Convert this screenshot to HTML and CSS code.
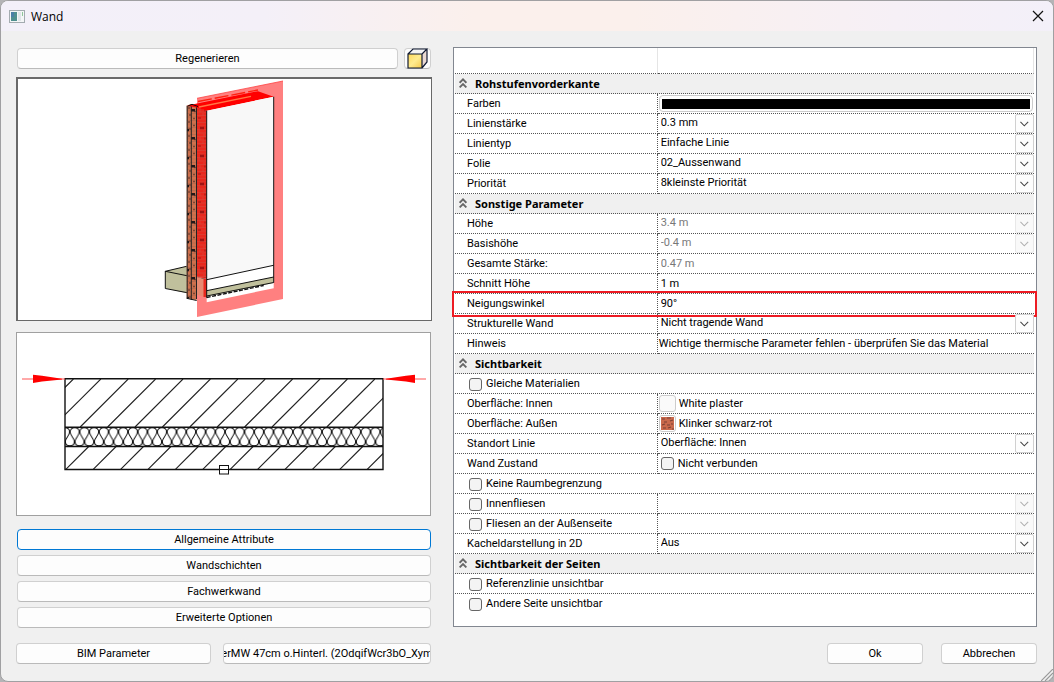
FILE: index.html
```
<!DOCTYPE html>
<html lang="de">
<head>
  <meta charset="UTF-8" />
  <meta name="viewport" content="width=device-width, initial-scale=1" />
  <title>Wand</title>
  <link rel="stylesheet" href="styles.css">
</head>
<body>

  <!-- gemeinsame Symbole -->
  <svg class="defs" width="0" height="0" aria-hidden="true">
    <symbol id="chevron" viewBox="0 0 18 18"><path d="M4.7 7.3l4.1 4.1 4.1-4.1" fill="none" stroke="currentColor" stroke-width="1.1" /></symbol>
    <symbol id="collapse" viewBox="0 0 8 10"><path d="M.6 4.8L4 1.4l3.4 3.4M.6 9.4L4 6l3.4 3.4" fill="none" stroke="#666" stroke-width="1.9" /></symbol>
  </svg>

  <div class="dialog">
    <header class="titlebar">
      <svg class="app-icon" width="16" height="13" viewBox="0 0 16 13">
        <rect x=".5" y=".5" width="15" height="12" fill="#f4f6f7" stroke="#a3abb0" />
        <rect x="2" y="2" width="6" height="9" fill="#4f8f8f" />
        <rect x="2" y="2" width="3" height="5" fill="#4a7fa6" />
        <rect x="9" y="2" width="3" height="9" fill="#dfe5e8" />
        <rect x="13" y="2" width="1" height="4" fill="#8fc59a" />
      </svg>
      <h1>Wand</h1>
      <button class="close" aria-label="Schließen">
        <svg width="12" height="12" viewBox="0 0 12 12"><path d="M1 1l10 10M11 1L1 11" stroke="#111" stroke-width="1.2" /></svg>
      </button>
    </header>

    <main class="columns">
      <section class="left">
        <div class="toolbar">
          <button class="btn grow">Regenerieren</button>
          <button class="btn cube" aria-label="3D-Ansicht">
            <svg width="21" height="21" viewBox="0 0 21 21">
              <defs>
                <linearGradient id="gold" x1="0" y1="0" x2="1" y2="1"><stop offset="0" stop-color="#ffd95a" /><stop offset=".5" stop-color="#ffec90" /><stop offset="1" stop-color="#f5c94a" /></linearGradient>
              </defs>
              <path d="M1 6L6 1h14l-5 5z" fill="#f4f4f4" />
              <path d="M15 6l5-5v13l-5 6z" fill="#ead9d2" />
              <rect x="1" y="6" width="14" height="14" fill="url(#gold)" />
              <path d="M1 6h14v14H1zM1 6l5-5h14l-5 5M20 1v13l-5 6" fill="none" stroke="#111a33" stroke-width="1.2" />
            </svg>
          </button>
        </div>

        <div class="view view-3d">
          <svg viewBox="18 79 413 241" role="img" aria-label="3D-Vorschau">
            <defs>
              <pattern id="brick" x="187" y="105" width="10" height="28" patternUnits="userSpaceOnUse">
                <rect width="10" height="28" fill="#d0704c" />
                <path d="M0 1.5h10M0 5h10M0 8.5h10M0 12h10M0 15.5h10M0 19h10M0 22.5h10M0 26h10" stroke="#a8664e" stroke-width=".6" />
                <path d="M1 3h2M7 6.5h2M2 10h2M6 13.5h2M1 17h2M6 20.5h2M2 24h2" stroke="#7a4434" stroke-width="1.6" />
                <path d="M4 5.2h4M0 25h2" stroke="#241818" stroke-width="2.6" />
              </pattern>
              <pattern id="redbrick" x="197" y="98" width="10" height="28" patternUnits="userSpaceOnUse">
                <rect width="10" height="28" fill="#e8281e" />
                <path d="M0 3.5h10M0 7h10M0 10.5h10M0 14h10M0 17.5h10M0 21h10M0 24.5h10M0 28h10M5 0v3M2 4v3M7 8v3M3 11v3M6 15v3" stroke="#d4483c" stroke-width=".6" />
                <path d="M3 2h4" stroke="#a01414" stroke-width="2.6" />
                <path d="M7 12.5h3M1 20h3" stroke="#c42018" stroke-width="2" />
              </pattern>
            </defs>
            <path d="M197 98.3L283 81v218l-86 18z" fill="#ff8080" />
            <path d="M197 98.3L283 81" stroke="#f44" stroke-width=".8" />
            <path d="M206.7 110.7l67-14v191.5l-67 14z" fill="#fff" />
            <!-- Fundament -->
            <path d="M165.3 271.3l21.4-5 10 2v27l-10-2-21.4-5z" fill="#c0c09c" />
            <path d="M186.7 266.3l-21.4 5 41.4 8.4M165.3 271v17.5l31.4 6" fill="none" stroke="#111" />
            <!-- Klinker -->
            <path d="M186.7 105.7l4-1.7 6 2v194l-10-1.7z" fill="url(#brick)" />
            <path d="M187.2 105.7v193M191.3 106v194M196.5 104v195" stroke="#222" />
            <path d="M186.7 298.3l10 2.2" stroke="#111" />
            <path d="M197 107l10 3.7v168l-10-2z" fill="url(#redbrick)" />
            <path d="M197 277l10 2.7v18l-10-3z" fill="#e88a72" />
            <path d="M205 279v18" stroke="#e8281e" stroke-width="3" />
            <!-- Mauerkrone -->
            <path d="M187 105.7l10-2.2 61-12.3 15.7 5.5-67 14-10-3.2z" fill="red" />
            <path d="M199 107l52-10.6" stroke="#ff7846" stroke-width="1.4" />
            <path d="M198 101.5l60-11.5" stroke="#ff2010" stroke-width="1.4" stroke-dasharray="14 3" />
            <path d="M188 106l4-1.7 6 2.2" fill="none" stroke="#111" />
            <!-- Innenseite -->
            <path d="M206.7 110.7l67-14v168.6l-67 14.4z" fill="#f8f8f8" />
            <path d="M206.7 290.7l67-13.7v6l-67 13.5z" fill="#c0c09c" />
            <path d="M206.7 279.7l67-14.4M206.7 290.7l67-13.7M206.7 296l67-13.5M273.7 96.7v186M206.7 110.7v187" fill="none" stroke="#111" />
            <path d="M206.7 297.5l57-12" stroke="#111" stroke-width="1.4" stroke-dasharray="4 1.5" />
          </svg>
        </div>

        <div class="view view-cut">
          <svg viewBox="17 333 413 182" role="img" aria-label="Wandaufbau">
            <defs>
              <pattern id="wool" x="65" y="427" width="9.7" height="20" patternUnits="userSpaceOnUse">
                <path d="M0 .8C3.4 .8 4.5 2.8 4.5 5C4.5 9 .4 10.5 .4 14.8C.4 17.2 2 18.8 4.85 18.8C7.7 18.8 9.3 17.2 9.3 14.8C9.3 10.5 5.2 9 5.2 5C5.2 2.8 6.3 .8 9.7 .8" fill="none" stroke="#111" stroke-width="1" />
              </pattern>
              <clipPath id="wall"><rect x="65" y="379" width="318" height="90" /></clipPath>
            </defs>
            <g clip-path="url(#wall)" fill="none" stroke="#222" stroke-width="1.1">
              <path d="M73.4 379l-48 48M100.8 379l-48 48M128.2 379l-48 48M155.6 379l-48 48M183 379l-48 48M210.4 379l-48 48M237.8 379l-48 48M265.2 379l-48 48M292.6 379l-48 48M320 379l-48 48M347.4 379l-48 48M374.8 379l-48 48M402.2 379l-48 48" />
              <path d="M65.7 469.5l23-23M93.1 469.5l23-23M120.5 469.5l23-23M147.9 469.5l23-23M175.3 469.5l23-23M202.7 469.5l23-23M230.1 469.5l23-23M257.5 469.5l23-23M284.9 469.5l23-23M312.3 469.5l23-23M339.7 469.5l23-23M367.1 469.5l23-23" />
            </g>
            <rect x="65" y="427" width="318" height="19.5" fill="url(#wool)" />
            <path d="M65 378.7h318v90.8H65zM65 427.2h318M65 446.5h318" fill="none" stroke="#111" stroke-width="1.4" />
            <path d="M22 379h43M383 379h43" stroke="#f55" stroke-width="1.2" />
            <path d="M33 374.8l9 1 20 3v.6l-20 2.2-9 1.4zM415 374.8l-9 1-20 3v.6l20 2.2 9 1.4z" fill="red" />
            <rect x="219.5" y="465.5" width="9" height="8.5" fill="#fff" stroke="#111" />
            <path d="M220 469.5h8" stroke="#111" />
          </svg>
        </div>

        <nav class="pages">
          <button class="btn active">Allgemeine Attribute</button>
          <button class="btn">Wandschichten</button>
          <button class="btn">Fachwerkwand</button>
          <button class="btn">Erweiterte Optionen</button>
        </nav>
      </section>

      <section class="panel">
        <table class="props">
          <colgroup><col class="col-name"><col></colgroup>
          <thead>
            <tr><td></td><td></td></tr>
          </thead>
          <tbody>
            <tr class="group"><th colspan="2"><svg><use href="#collapse" /></svg>Rohstufenvorderkante</th></tr>
            <tr>
              <th>Farben</th>
              <td><button class="color" aria-label="Farben"><span></span></button></td>
            </tr>
            <tr>
              <th><label for="staerke">Linienstärke</label></th>
              <td><div class="combo"><select id="staerke"><option>0.3 mm</option></select><svg><use href="#chevron" /></svg></div></td>
            </tr>
            <tr>
              <th><label for="typ">Linientyp</label></th>
              <td><div class="combo"><select id="typ"><option>Einfache Linie</option></select><svg><use href="#chevron" /></svg></div></td>
            </tr>
            <tr>
              <th><label for="folie">Folie</label></th>
              <td><div class="combo"><select id="folie"><option>02_Aussenwand</option></select><svg><use href="#chevron" /></svg></div></td>
            </tr>
            <tr>
              <th><label for="prio">Priorität</label></th>
              <td><div class="combo"><select id="prio"><option>8kleinste Priorität</option></select><svg><use href="#chevron" /></svg></div></td>
            </tr>

            <tr class="group"><th colspan="2"><svg><use href="#collapse" /></svg>Sonstige Parameter</th></tr>
            <tr>
              <th><label for="hoehe">Höhe</label></th>
              <td><div class="combo"><select id="hoehe" disabled><option>3.4 m</option></select><svg><use href="#chevron" /></svg></div></td>
            </tr>
            <tr>
              <th><label for="basis">Basishöhe</label></th>
              <td><div class="combo"><select id="basis" disabled><option>-0.4 m</option></select><svg><use href="#chevron" /></svg></div></td>
            </tr>
            <tr>
              <th><label for="gesamt">Gesamte Stärke:</label></th>
              <td><input type="text" id="gesamt" value="0.47 m" disabled></td>
            </tr>
            <tr>
              <th><label for="schnitt">Schnitt Höhe</label></th>
              <td><input type="text" id="schnitt" value="1 m"></td>
            </tr>
            <tr class="marked">
              <th><label for="neigung">Neigungswinkel</label></th>
              <td><input type="text" id="neigung" value="90°"></td>
            </tr>
            <tr>
              <th><label for="strukt">Strukturelle Wand</label></th>
              <td><div class="combo"><select id="strukt"><option>Nicht tragende Wand</option></select><svg><use href="#chevron" /></svg></div></td>
            </tr>
            <tr>
              <th>Hinweis</th>
              <td class="note">Wichtige thermische Parameter fehlen - überprüfen Sie das Material</td>
            </tr>

            <tr class="group"><th colspan="2"><svg><use href="#collapse" /></svg>Sichtbarkeit</th></tr>
            <tr>
              <th colspan="2"><label class="check"><input type="checkbox">Gleiche Materialien</label></th>
            </tr>
            <tr>
              <th>Oberfläche: Innen</th>
              <td><div class="material"><button class="swatch plaster" aria-label="Material innen"></button>White plaster</div></td>
            </tr>
            <tr>
              <th>Oberfläche: Außen</th>
              <td>
                <div class="material">
                  <button class="swatch" aria-label="Material außen">
                    <svg width="13" height="13" viewBox="0 0 13 13">
                      <rect width="13" height="13" fill="#c9694c" />
                      <path d="M1 2h3M6 1h4M3 5h3M9 4l3-1M1 8l3-1M6 8h3M10 7h2M2 11h3M7 11l3-1M11 12h2" stroke="#7a4034" stroke-width="1.2" />
                    </svg>
                  </button>Klinker schwarz-rot
                </div>
              </td>
            </tr>
            <tr>
              <th><label for="standort">Standort Linie</label></th>
              <td><div class="combo"><select id="standort"><option>Oberfläche: Innen</option></select><svg><use href="#chevron" /></svg></div></td>
            </tr>
            <tr>
              <th>Wand Zustand</th>
              <td><label class="check"><input type="checkbox">Nicht verbunden</label></td>
            </tr>
            <tr>
              <th colspan="2"><label class="check"><input type="checkbox">Keine Raumbegrenzung</label></th>
            </tr>
            <tr>
              <th><label class="check"><input type="checkbox">Innenfliesen</label></th>
              <td><div class="combo"><select aria-label="Innenfliesen" disabled></select><svg><use href="#chevron" /></svg></div></td>
            </tr>
            <tr>
              <th><label class="check"><input type="checkbox">Fliesen an der Außenseite</label></th>
              <td><div class="combo"><select aria-label="Fliesen an der Außenseite" disabled></select><svg><use href="#chevron" /></svg></div></td>
            </tr>
            <tr>
              <th><label for="kachel">Kacheldarstellung in 2D</label></th>
              <td><div class="combo"><select id="kachel"><option>Aus</option></select><svg><use href="#chevron" /></svg></div></td>
            </tr>

            <tr class="group"><th colspan="2"><svg><use href="#collapse" /></svg>Sichtbarkeit der Seiten</th></tr>
            <tr>
              <th colspan="2"><label class="check"><input type="checkbox">Referenzlinie unsichtbar</label></th>
            </tr>
            <tr>
              <th colspan="2"><label class="check"><input type="checkbox">Andere Seite unsichtbar</label></th>
            </tr>
          </tbody>
        </table>
      </section>
    </main>

    <footer class="columns actions">
      <div class="action-left">
        <button class="btn">BIM Parameter</button>
        <button class="btn material-name"><span>erMW 47cm o.Hinterl. (2OdqifWcr3bO_Xym</span></button>
      </div>
      <div class="action-right">
        <button class="btn">Ok</button>
        <button class="btn">Abbrechen</button>
      </div>
    </footer>

    <svg class="grip" width="12" height="12" viewBox="0 0 12 12"><path d="M0 12L12 0M4 12l8-8M8 12l4-4" stroke="#999" stroke-width="1.2" /></svg>
  </div>

</body>
</html>
```
FILE: styles.css
```
* {
  box-sizing: border-box;
}

body {
  margin: 0;
  background-color: #b4b4b6;
  font-family: Roboto, "Noto Sans", sans-serif;
  font-size: 11px;
  color: #000;
}

button, select, input {
  font: inherit;
  color: inherit;
  margin: 0;
}

.defs {
  position: absolute;
}

.dialog {
  position: relative;
  display: flex;
  flex-direction: column;
  min-height: 100vh;
  background-color: #f0f0f0;
  border: 1px solid #a0a0a2;
  border-radius: 8px;
  overflow: hidden;
}

/* Titelleiste */
.titlebar {
  display: flex;
  align-items: center;
  gap: 6px;
  height: 30px;
  padding: 0 9px 0 8px;
  background: linear-gradient(90deg, #f3f0f9 0%, #f4f0f8 25%, #fbf0ec 45%, #fbf0ec 60%, #f6f0f6 85%, #f3f0f9 100%);
}

.titlebar h1 {
  flex: 1;
  margin: 0;
  font-family: "Open Sans", "Noto Sans", sans-serif;
  font-size: 12px;
  font-weight: 400;
}

.close {
  display: flex;
  padding: 0;
  border: none;
  background: none;
}

/* Spalten */
.columns {
  display: grid;
  grid-template-columns: minmax(0, 416fr) minmax(0, 584fr);
  column-gap: 21px;
  padding: 16px 16px 0 15px;
}

.left {
  display: flex;
  flex-direction: column;
  padding-top: 1px;
}

.toolbar {
  display: flex;
  gap: 6px;
  margin: 0 1px 8px;
}

.grow {
  flex: 1;
}

.btn {
  height: 21px;
  padding: 1px 4px 0;
  background-color: #fdfdfd;
  border: 1px solid #d0d0d0;
  border-bottom-color: #bababa;
  border-radius: 4px;
  line-height: 18px;
  white-space: nowrap;
}

.btn.active {
  border-color: #0078d4;
}

.cube {
  display: flex;
  align-items: center;
  justify-content: center;
  width: 27px;
  padding: 0;
}

.cube svg {
  flex: none;
}

.view {
  background-color: #fff;
}

.view svg {
  display: block;
  width: 100%;
  height: 100%;
}

.view-3d {
  height: 244px;
  border: 1px solid #696969;
  border-width: 2px 1px 1px 2px;
  margin-bottom: 11px;
}

.view-cut {
  height: 184px;
  border: 1px solid #a0a0a0;
  margin: 0 1px 13px 0;
}

.pages {
  display: flex;
  flex-direction: column;
  gap: 5px;
  margin: 0 1px;
}

/* Eigenschaften */
.panel {
  margin-bottom: 1px;
  padding: 0 2px 0 1px;
  background-color: #fff;
  border: 1px solid #828790;
}

.props {
  width: 100%;
  table-layout: fixed;
  border-collapse: separate;
  border-spacing: 0;
}

.col-name {
  width: 35%;
}

.props th,
.props td {
  height: 20px;
  padding: 0;
  border-bottom: 1px dotted #555;
  font-weight: 400;
  text-align: left;
  line-height: 18px;
  white-space: nowrap;
}

.props th {
  padding: 1px 0 0 12px;
}

.props th:first-child:not(:last-child) {
  border-right: 1px dotted #555;
}

.props thead td {
  height: 26px;
  border-right: 1px solid #e5e5e5;
}

.props tbody tr:last-child th {
  border-bottom-color: transparent;
}

.props .group th {
  padding: 0 0 0 4px;
  background-color: #f0f0f0;
  font-family: "Noto Sans", sans-serif;
  font-weight: 700;
  line-height: 19px;
}

.group svg {
  width: 8px;
  height: 10px;
  margin-right: 8px;
}

/* rote Markierung um die ganze Zeile */
.marked {
  outline: 2px solid #ed1c24;
  outline-offset: 1px;
}

.combo {
  position: relative;
  display: flex;
  height: 19px;
}

.combo select {
  flex: 1;
  appearance: none;
  padding: 0 20px 2px 3px;
  border: none;
  background: none;
  opacity: 1;
}

.combo svg {
  position: absolute;
  top: 0;
  right: 0;
  width: 19px;
  height: 19px;
  border: 1px solid #d0d0d0;
  border-radius: 2px;
  background-color: #fdfdfd;
  color: #444;
  pointer-events: none;
}

.combo select:disabled + svg {
  border-color: #e8e8e8;
  background-color: #f9f9f9;
  color: #b0b0b0;
}

select:disabled,
input:disabled {
  color: #787878;
}

.props input[type="text"] {
  display: block;
  width: 100%;
  height: 19px;
  padding: 0 3px;
  border: none;
  background: none;
}

.props .note {
  padding: 1px 0 0 1px;
}

.color {
  display: block;
  width: calc(100% - 2px);
  height: 17px;
  margin-left: 1px;
  padding: 2px;
  background-color: #fdfdfd;
  border: 1px solid #ccc;
  border-radius: 4px;
}

.color span {
  display: block;
  height: 10px;
  background-color: #000;
}

.check {
  display: flex;
  align-items: center;
  gap: 4px;
  padding-left: 2px;
  height: 18px;
}

.check input {
  appearance: none;
  width: 13px;
  height: 13px;
  border: 1px solid #666;
  border-radius: 3px;
  background-color: #f4f4f4;
}

td .check {
  padding-left: 3px;
}

.material {
  display: flex;
  align-items: center;
  gap: 3px;
  height: 19px;
  padding-left: 1px;
}

.swatch {
  display: flex;
  width: 17px;
  height: 17px;
  padding: 1px;
  border: 1px solid #ccc;
  border-radius: 3px;
  background-color: #fdfdfd;
}

.plaster {
  background-color: #fafafa;
}

/* Fußzeile */
.actions {
  padding-top: 15px;
  padding-bottom: 16px;
}

.action-left {
  display: grid;
  grid-template-columns: minmax(0, 195fr) minmax(0, 208fr);
  gap: 12px;
  padding-right: 1px;
}

.material-name {
  display: flex;
  justify-content: center;
  padding: 1px 1px 0;
  overflow: hidden;
}

.action-right {
  display: flex;
  justify-content: flex-end;
  gap: 18px;
}

.action-right .btn {
  width: 96px;
}

.grip {
  position: absolute;
  right: 0;
  bottom: 0;
}
```
